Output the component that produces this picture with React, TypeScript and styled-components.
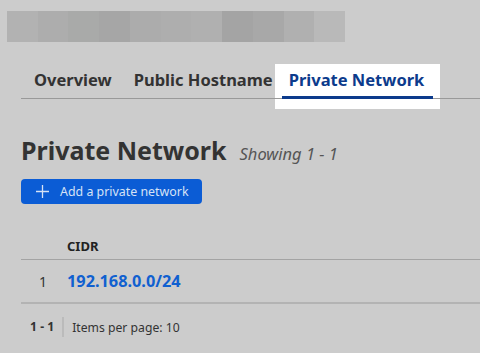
import React from 'react';
import styled, { createGlobalStyle } from 'styled-components';

const GlobalStyle = createGlobalStyle`
    html, body {
        margin: 0;
        padding: 0;
        background: #cccccc;
        font-family: "Noto Sans", "Open Sans", sans-serif;
        color: #333333;
    }
`;

const Page = styled.div`
    width: 480px;
    height: 353px;
    overflow: hidden;
    background: #cccccc;
`;

const Blur = styled.div`
    display: flex;
    margin: 11px 0 0 7px;
    width: 338px;
    height: 31px;
`;

const BlurBlock = styled.div<{ $c: string }>`
    flex: 1;
    background: ${p => p.$c};
`;

const Tabs = styled.div`
    position: relative;
    display: flex;
    align-items: flex-start;
    margin: 22px 0 0 21px;
    padding-left: 2px;
    height: 34px;

    &::after {
        content: '';
        position: absolute;
        left: 0;
        right: 0;
        top: 34px;
        height: 1px;
        background: #999999;
        z-index: 1;
    }
`;

const Tab = styled.div<{ $active?: boolean }>`
    position: relative;
    box-sizing: border-box;
    height: ${p => (p.$active ? '45px' : '34px')};
    padding: ${p => (p.$active ? '5px 16px 0 14px' : '5px 11px 0')};
    margin-left: ${p => (p.$active ? '-9px' : '0')};
    line-height: 22px;
    font-size: 16.5px;
    font-weight: 700;
    white-space: nowrap;
    color: ${p => (p.$active ? '#0c3b8c' : '#333333')};
    background: ${p => (p.$active ? '#ffffff' : 'transparent')};

    ${p =>
        p.$active &&
        `
        &::after {
            content: '';
            position: absolute;
            left: 7px;
            right: 7px;
            top: 32px;
            height: 3px;
            background: #0c3b8c;
            z-index: 2;
        }
    `}
`;

const Title = styled.div`
    display: flex;
    align-items: baseline;
    gap: 13px;
    margin: 37px 0 0 21px;
`;

const H1 = styled.h1`
    margin: 0;
    font-size: 25px;
    font-weight: 700;
    color: #333333;
    line-height: 30px;
`;

const Showing = styled.span`
    font-size: 16.5px;
    font-style: italic;
    color: #555555;
`;

const AddButton = styled.button`
    display: flex;
    align-items: center;
    gap: 11px;
    margin: 14px 0 0 21px;
    height: 25px;
    width: 181px;
    padding: 0 0 0 15px;
    border: none;
    border-radius: 4px;
    background: #0b5cd5;
    color: #d6e2f5;
    font-family: inherit;
    font-size: 12.4px;
`;

const Table = styled.div`
    margin: 29px 0 0 21px;
`;

const HeadRow = styled.div`
    display: grid;
    grid-template-columns: 46px 1fr;
    height: 26px;
    align-items: center;
    border-bottom: 1px solid #a3a3a3;
    font-size: 13px;
    font-weight: 700;
    color: #222222;
`;

const Row = styled.div`
    display: grid;
    grid-template-columns: 46px 1fr;
    height: 42px;
    align-items: center;
    border-bottom: 2px solid #b3b3b3;
`;

const Index = styled.div`
    text-align: right;
    padding-right: 20px;
    font-size: 14px;
    color: #333333;
`;

const Link = styled.a`
    font-size: 16.3px;
    font-weight: 700;
    color: #1060d0;
`;

const Footer = styled.div`
    display: flex;
    align-items: center;
    margin: 13px 0 0 30px;
    font-size: 12.2px;
    color: #333333;
`;

const Count = styled.span`
    font-weight: 700;
    padding-right: 8px;
    border-right: 2px solid #bbbbbb;
    line-height: 20px;
`;

const PerPage = styled.span`
    padding-left: 8px;
`;

const blocks = ['#b2b2b2', '#adadad', '#a9aaa9', '#a6a6a6', '#acacac', '#aeaeae', '#b0b0b0', '#a4a4a4', '#a8a8a8', '#b0b0b0', '#b9b9b9'];

const App: React.FC = () => {
    return (
        <Page>
            <GlobalStyle />
            <Blur>
                {blocks.map((c, i) => (
                    <BlurBlock key={i} $c={c} />
                ))}
            </Blur>
            <Tabs>
                <Tab>Overview</Tab>
                <Tab>Public Hostname</Tab>
                <Tab $active>Private Network</Tab>
            </Tabs>
            <Title>
                <H1>Private Network</H1>
                <Showing>Showing 1 - 1</Showing>
            </Title>
            <AddButton>
                <svg width="13" height="13" viewBox="0 0 13 13">
                    <path d="M6.5 0v13M0 6.5h13" stroke="#d6e2f5" strokeWidth="1.3" />
                </svg>
                Add a private network
            </AddButton>
            <Table>
                <HeadRow>
                    <div />
                    <div>CIDR</div>
                </HeadRow>
                <Row>
                    <Index>1</Index>
                    <div>
                        <Link>192.168.0.0/24</Link>
                    </div>
                </Row>
            </Table>
            <Footer>
                <Count>1 - 1</Count>
                <PerPage>Items per page: 10</PerPage>
            </Footer>
        </Page>
    );
};

export default App;
